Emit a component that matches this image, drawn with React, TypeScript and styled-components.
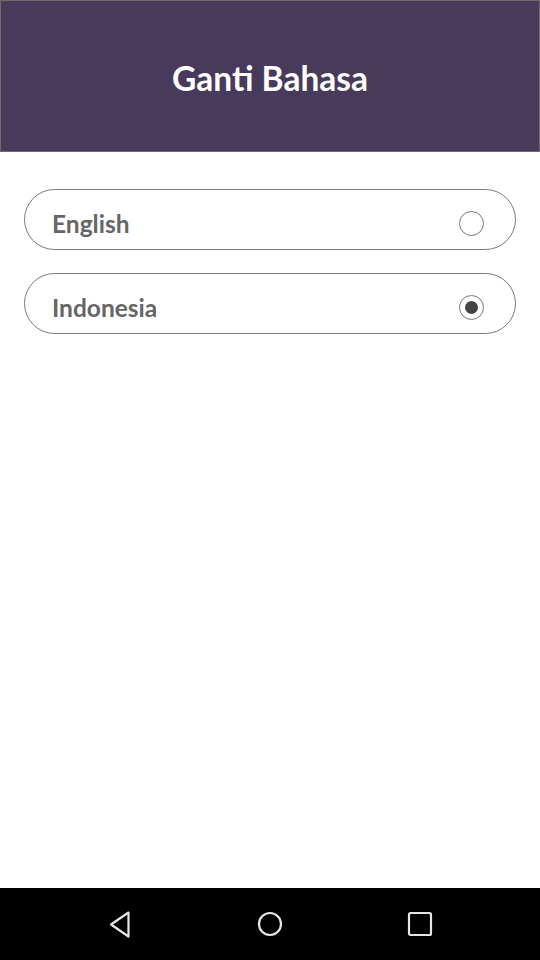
import { useState } from "react"
import styled, { createGlobalStyle } from "styled-components"

const GlobalStyle = createGlobalStyle`
  html, body {
    margin: 0;
    padding: 0;
    background: #ffffff;
  }
  body {
    font-family: Lato, "Open Sans", "Liberation Sans", sans-serif;
  }
`

const Screen = styled.div`
  width: 540px;
  height: 960px;
  display: flex;
  flex-direction: column;
  background: #ffffff;
`

const Header = styled.header`
  height: 152px;
  box-sizing: border-box;
  border: 1px solid #6c6c6c;
  background: #483a5a;
  display: flex;
  align-items: center;
  justify-content: center;
  padding-top: 3px;
`

const Title = styled.h1`
  margin: 0;
  color: #ffffff;
  font-size: 33.5px;
  font-weight: 700;
`

const Content = styled.main`
  flex: 1;
  display: flex;
  flex-direction: column;
  gap: 23px;
  padding: 37px 24px 0;
`

const Option = styled.button`
  height: 61px;
  box-sizing: border-box;
  border: 1.5px solid #7a7a7a;
  border-radius: 31px;
  background: #ffffff;
  display: flex;
  align-items: center;
  justify-content: space-between;
  padding: 7px 31px 0 27px;
  font-family: inherit;
  cursor: pointer;
`

const Label = styled.span`
  color: #666666;
  font-size: 24.5px;
  font-weight: 700;
`

const Radio = styled.span<{ $checked: boolean }>`
  width: 25px;
  height: 25px;
  box-sizing: border-box;
  border: 1.3px solid #7a7a7a;
  border-radius: 50%;
  display: flex;
  align-items: center;
  justify-content: center;

  &::after {
    content: "";
    width: 13px;
    height: 13px;
    border-radius: 50%;
    background: #444444;
    display: ${(p) => (p.$checked ? "block" : "none")};
  }
`

const NavBar = styled.nav`
  height: 72px;
  background: #000000;
  display: flex;
  align-items: center;
  justify-content: center;
  gap: 120px;
`

const NavButton = styled.span`
  width: 30px;
  height: 30px;
  display: flex;
  align-items: center;
  justify-content: center;
`

const languages = ["English", "Indonesia"]

function App() {
  const [selected, setSelected] = useState<string>("Indonesia")

  return (
    <Screen>
      <GlobalStyle />
      <Header>
        <Title>Ganti Bahasa</Title>
      </Header>
      <Content>
        {languages.map((lang) => (
          <Option key={lang} onClick={() => setSelected(lang)}>
            <Label>{lang}</Label>
            <Radio $checked={selected === lang} />
          </Option>
        ))}
      </Content>
      <NavBar>
        <NavButton>
          <svg width="22" height="27" viewBox="0 0 22 27">
            <path d="M19.5 1.5 L2 13.5 L19.5 25.5 Z" fill="none" stroke="#e6e6e6" strokeWidth="2.2" strokeLinejoin="round" />
          </svg>
        </NavButton>
        <NavButton>
          <svg width="26" height="26" viewBox="0 0 26 26">
            <circle cx="13" cy="13" r="11" fill="none" stroke="#e6e6e6" strokeWidth="2.2" />
          </svg>
        </NavButton>
        <NavButton>
          <svg width="26" height="26" viewBox="0 0 26 26">
            <rect x="2" y="2" width="22" height="22" rx="1.5" fill="none" stroke="#e6e6e6" strokeWidth="2.2" />
          </svg>
        </NavButton>
      </NavBar>
    </Screen>
  )
}

export default App
